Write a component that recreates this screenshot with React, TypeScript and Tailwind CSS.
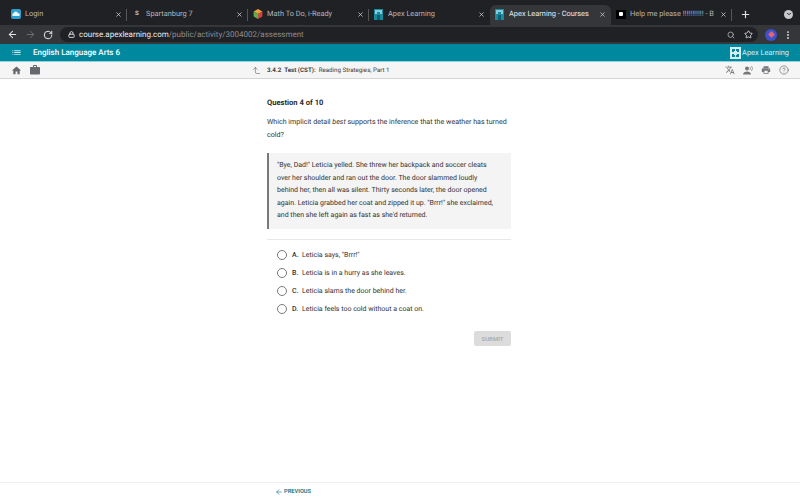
import React from "react";
import { ArrowLeft, ArrowRight, RotateCw, Lock, Search, Star, EllipsisVertical, Plus, X, CornerLeftUp, CircleHelp, ChevronDown } from "lucide-react";

function Tab({ title, icon, active, sep = true }: { title: string; icon: React.ReactNode; active?: boolean; sep?: boolean }) {
  return (
    <div className={`relative flex h-[20px] w-[121px] shrink-0 items-center pb-[2px] pl-[5px] pr-[5px] ${active ? "rounded-t-[6px] bg-[#35363a] text-[#e8eaed]" : "text-[#b4b7bb]"}`}>
      <span className="flex w-[14px] shrink-0 items-center justify-start">{icon}</span>
      <span className="min-w-0 flex-1 overflow-hidden whitespace-nowrap text-[7.4px] leading-[12px]">{title}</span>
      <X size={7} strokeWidth={2.5} className="ml-1 shrink-0 text-[#d5d7da]" />
      {sep && !active && <span className="absolute right-0 top-[4px] h-[12px] w-px bg-[#55575b]" />}
    </div>
  );
}

function ApexIcon({ size = 9 }: { size?: number }) {
  return (
    <svg width={size} height={size + 2} viewBox="0 0 9 11">
      <rect width="9" height="11" fill="#1b8a9c" />
      <path d="M1 1h7v4H6V3H3v2H1z" fill="#7fd0dc" />
      <path d="M3 6h3v5H3z" fill="#0d5f6e" />
    </svg>
  );
}

function Mat({ d, size = 10, className = "" }: { d: string; size?: number; className?: string }) {
  return (
    <svg width={size} height={size} viewBox="0 0 24 24" fill="currentColor" className={className}>
      <path d={d} />
    </svg>
  );
}

export default function App() {
  return (
    <div className="flex h-[500px] w-[800px] flex-col overflow-hidden bg-white font-['Roboto',sans-serif] [text-rendering:geometricPrecision]">
      <div className="flex h-[25px] shrink-0 items-end bg-[#202124] pl-[6px]">
        <Tab
          title="Login"
          icon={
            <svg width="10" height="10" viewBox="0 0 10 10">
              <rect width="10" height="10" rx="2" fill="#2f9fd0" />
              <path d="M2 7a1.5 1.5 0 0 1 .5-2.8A2.3 2.3 0 0 1 7 4.2 1.5 1.5 0 0 1 8 7z" fill="#e6f6fc" />
            </svg>
          }
        />
        <Tab title="Spartanburg 7" icon={<span className="pl-[3px] text-[6px] font-bold leading-none text-[#c7c9cc]">S</span>} />
        <Tab
          title="Math To Do, i-Ready"
          icon={
            <svg width="10" height="10" viewBox="0 0 10 10">
              <path d="M5 0l4.4 2.5L5 5 .6 2.5z" fill="#e8a33b" />
              <path d="M.6 2.5L5 5v5L.6 7.5z" fill="#5fae4b" />
              <path d="M9.4 2.5L5 5v5l4.4-2.5z" fill="#c9473f" />
            </svg>
          }
        />
        <Tab title="Apex Learning" icon={<ApexIcon />} sep={false} />
        <Tab title="Apex Learning - Courses" icon={<ApexIcon />} active />
        <Tab
          title="Help me please !!!!!!!!!!! - B"
          icon={
            <span className="flex h-[9px] w-[10px] items-center justify-center bg-black">
              <span className="h-[4px] w-[4px] rounded-[1px] bg-white" />
            </span>
          }
        />
        <div className="flex h-[20px] flex-1 items-center pb-[2px] pl-[8px] pr-[7px]">
          <Plus size={11} strokeWidth={2.5} className="text-[#e0e2e5]" />
          <span className="ml-auto flex h-[9px] w-[9px] items-center justify-center rounded-full bg-[#c7c9cc]">
            <ChevronDown size={6} strokeWidth={4} className="text-[#202124]" />
          </span>
        </div>
      </div>

      <div className="flex h-[19px] shrink-0 items-center bg-[#35363a] pl-[7px] pr-[7px]">
        <ArrowLeft size={11} strokeWidth={2.2} className="text-[#e3e5e8]" />
        <ArrowRight size={11} strokeWidth={2} className="ml-[7px] text-[#6f7276]" />
        <RotateCw size={10} strokeWidth={2.4} className="ml-[7px] text-[#e3e5e8]" />
        <div className="ml-[7px] flex h-[15px] flex-1 items-center rounded-full bg-[#202124] pl-[8px] pr-[5px]">
          <Lock size={7} strokeWidth={3} className="text-[#e3e5e8]" />
          <span className="ml-[4px] text-[8px] leading-[12px] text-[#e8eaed]">
            course.apexlearning.com<span className="text-[#8b8e92]">/public/activity/3004002/assessment</span>
          </span>
          <Search size={8} strokeWidth={2.4} className="ml-auto text-[#b6b8bb]" />
          <Star size={9} strokeWidth={2.2} className="ml-[9px] text-[#e3e5e8]" />
        </div>
        <span className="ml-[7px] flex h-[12px] w-[12px] items-center justify-center rounded-full bg-[#3c52c9]">
          <span className="h-[5px] w-[5px] rotate-45 rounded-[1px] bg-[#e5617a]" />
        </span>
        <EllipsisVertical size={10} strokeWidth={2.6} className="ml-[6px] text-[#d8dadd]" />
      </div>

      <div className="flex h-[17px] shrink-0 items-center bg-[#00889f] pl-[11px] pr-[11px]">
        <Mat size={11} className="text-[#cfeaf0]" d="M3 13h2v-2H3v2zm0 4h2v-2H3v2zm0-8h2V7H3v2zm4 4h14v-2H7v2zm0 4h14v-2H7v2zM7 7v2h14V7H7z" />
        <span className="ml-[11px] pt-[1px] text-[8px] font-medium leading-[12px] text-white">English Language Arts 6</span>
        <svg width="11" height="12" viewBox="0 0 11 12" className="ml-auto">
          <rect width="11" height="12" fill="#d6eef2" />
          <path d="M2 2h3v2H4v1H2zM6 2h3v3H7V4H6zM2 7h2v1h1v2H2zM7 7h2v3H6V8h1z" fill="#00889f" />
        </svg>
        <span className="ml-[1px] pt-[1px] text-[7.4px] leading-[12px] text-[#d6eef2]">Apex Learning</span>
      </div>

      <div className="flex h-[18px] shrink-0 items-center border-t border-b border-t-[#8fd3de] border-b-[#d5d5d5] bg-[#f5f5f5] pl-[11px] pr-[11px]">
        <Mat size={11} className="text-[#666a6e]" d="M10 20v-6h4v6h5v-8h3L12 3 2 12h3v8z" />
        <Mat size={12} className="ml-[7px] text-[#666a6e]" d="M20 6h-4V4c0-1.11-.89-2-2-2h-4c-1.11 0-2 .89-2 2v2H4c-1.11 0-2 .89-2 2v11c0 1.11.89 2 2 2h16c1.11 0 2-.89 2-2V8c0-1.11-.89-2-2-2zm-6 0h-4V4h4v2z" />
        <div className="ml-[211px] flex items-center">
          <CornerLeftUp size={9} strokeWidth={1.6} className="text-[#5f6368]" />
          <span className="ml-[6px] text-[6.2px] font-bold leading-[10px] text-[#3c4043]">3.4.2&nbsp; Test (CST):</span>
          <span className="ml-[3px] text-[6.2px] leading-[10px] text-[#3c4043]">Reading Strategies, Part 1</span>
        </div>
        <div className="ml-auto flex items-center gap-[8px] text-[#74787c]">
          <Mat d="M12.87 15.07l-2.54-2.51.03-.03c1.74-1.94 2.98-4.17 3.71-6.53H17V4h-7V2H8v2H1v1.99h11.17C11.5 7.92 10.44 9.75 9 11.35 8.07 10.32 7.3 9.19 6.69 8h-2c.73 1.63 1.73 3.17 2.98 4.56l-5.09 5.02L4 19l5-5 3.11 3.11.76-2.04zM18.5 10h-2L12 22h2l1.12-3h4.75L21 22h2l-4.5-12zm-2.62 7l1.62-4.33L19.12 17h-3.24z" />
          <svg width="10" height="9" viewBox="0 0 10 9" fill="currentColor">
            <circle cx="4" cy="2.5" r="2" />
            <path d="M0 8.5c0-2 2-3 4-3s4 1 4 3z" />
            <path d="M7 1a3 3 0 0 1 0 3M8.5 0a4 4 0 0 1 0 5" fill="none" stroke="currentColor" strokeWidth=".7" />
          </svg>
          <Mat d="M19 8H5c-1.66 0-3 1.34-3 3v6h4v4h12v-4h4v-6c0-1.66-1.34-3-3-3zm-3 11H8v-5h8v5zm3-7c-.55 0-1-.45-1-1s.45-1 1-1 1 .45 1 1-.45 1-1 1zm-1-9H6v4h12V3z" />
          <CircleHelp size={10} strokeWidth={1.8} />
        </div>
      </div>

      <main className="flex min-h-0 flex-1 flex-col">
        <div className="ml-[267px] w-[244px] flex-1 pt-[18px] text-[#333]">
          <h1 className="text-[7.6px] font-bold leading-[12px] text-[#2a2a2a]">Question 4 of 10</h1>
          <p className="mt-[7px] text-[7.1px] leading-[12.5px]">
            Which implicit detail <em>best</em> supports the inference that the weather has turned cold?
          </p>
          <blockquote className="mt-[12px] h-[76px] border-l-2 border-[#77797c] bg-[#f4f4f4] pl-[8px] pr-[12px] pt-[6px] text-[7px] leading-[12.5px]">
            "Bye, Dad!" Leticia yelled. She threw her backpack and soccer cleats over her shoulder and ran out the door. The door slammed loudly behind her, then all was silent. Thirty seconds later, the door opened again. Leticia grabbed her coat and zipped it up. "Brrr!" she exclaimed, and then she left again as fast as she'd returned.
          </blockquote>
          <div className="mt-[10px] h-px bg-[#e8e8e8]" />
          <ul className="mt-[6px] flex flex-col pl-[10px]">
            {[
              ["A.", 'Leticia says, "Brrr!"'],
              ["B.", "Leticia is in a hurry as she leaves."],
              ["C.", "Leticia slams the door behind her."],
              ["D.", "Leticia feels too cold without a coat on."],
            ].map(([l, t]) => (
              <li key={l} className="flex h-[18px] items-center text-[7px] text-[#333]">
                <span className="h-[10px] w-[10px] shrink-0 rounded-full border border-[#7a7a7a]" />
                <span className="ml-[5px] w-[10px] font-medium">{l}</span>
                <span>{t}</span>
              </li>
            ))}
          </ul>
          <div className="mt-[13px] flex justify-end">
            <button className="flex h-[15px] w-[37px] items-center justify-center rounded-[2px] bg-[#dcdcdc] text-[6px] font-medium text-[#a8a8a8]">SUBMIT</button>
          </div>
        </div>
        <footer className="flex h-[18px] shrink-0 items-center border-t border-[#eeeeee] pl-[275px] text-[#26808f]">
          <ArrowLeft size={8} strokeWidth={2} />
          <span className="ml-[1px] text-[5.7px] font-bold leading-[8px]">PREVIOUS</span>
        </footer>
      </main>
    </div>
  );
}
